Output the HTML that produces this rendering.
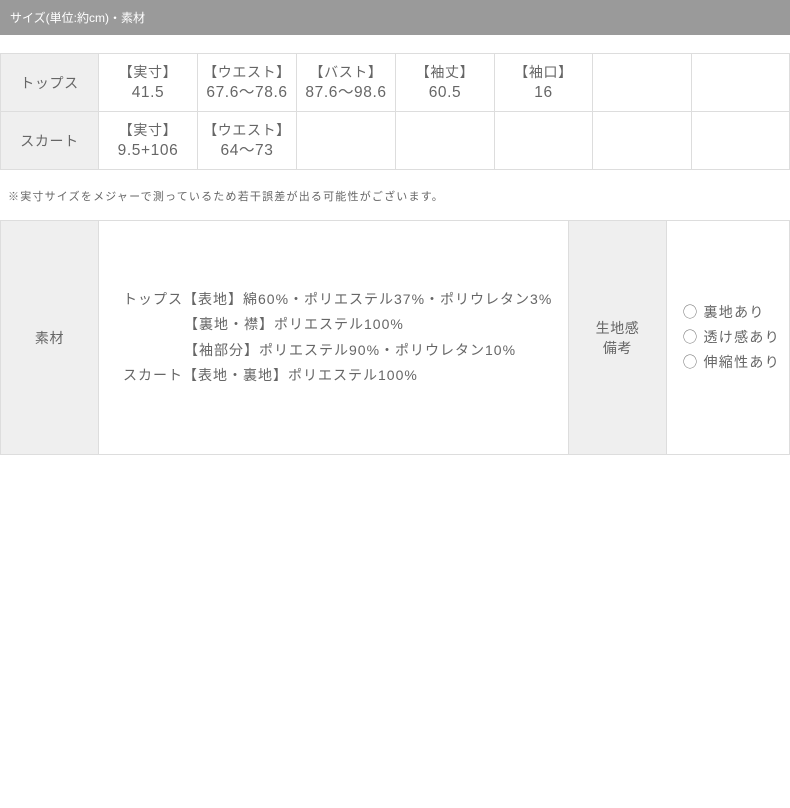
<!DOCTYPE html>
<html><head><meta charset="utf-8"><style>
body{margin:0;width:790px;height:808px;background:#fff;font-family:"Liberation Sans","Noto Sans CJK JP",sans-serif;color:#666;position:relative;overflow:hidden}
.hd{position:absolute;left:0;top:0;width:790px;height:35px;background:#9a9a9a;color:#fff;font-size:12px;line-height:37px;padding-left:10px;box-sizing:border-box}
.c{position:absolute;box-sizing:border-box;border-right:1px solid #ddd;border-bottom:1px solid #ddd;display:flex;align-items:center;justify-content:center;text-align:center;font-size:14px;line-height:20px;letter-spacing:0.6px}
.n{font-size:15.5px;letter-spacing:0.6px}
.g{background:#efefef}
.note{position:absolute;left:8px;top:188px;font-size:11px;color:#666;letter-spacing:1.2px}
</style></head><body>
<div class="hd">サイズ(単位:約cm)・素材</div>
<div style="position:absolute;left:0;top:53px;width:790px;border-top:1px solid #ddd"></div>
<div class="c g" style="left:0;top:54px;width:99px;height:58px;border-left:1px solid #ddd">トップス</div>
<div class="c" style="left:99px;top:54px;width:99px;height:58px"><div>【実寸】<br><span class="n">41.5</span></div></div>
<div class="c" style="left:198px;top:54px;width:99px;height:58px"><div>【ウエスト】<br><span class="n">67.6〜78.6</span></div></div>
<div class="c" style="left:297px;top:54px;width:99px;height:58px"><div>【バスト】<br><span class="n">87.6〜98.6</span></div></div>
<div class="c" style="left:396px;top:54px;width:99px;height:58px"><div>【袖丈】<br><span class="n">60.5</span></div></div>
<div class="c" style="left:495px;top:54px;width:98px;height:58px"><div>【袖口】<br><span class="n">16</span></div></div>
<div class="c" style="left:593px;top:54px;width:99px;height:58px"></div>
<div class="c" style="left:692px;top:54px;width:98px;height:58px"></div>
<div class="c g" style="left:0;top:112px;width:99px;height:58px;border-left:1px solid #ddd">スカート</div>
<div class="c" style="left:99px;top:112px;width:99px;height:58px"><div>【実寸】<br><span class="n">9.5+106</span></div></div>
<div class="c" style="left:198px;top:112px;width:99px;height:58px"><div>【ウエスト】<br><span class="n">64〜73</span></div></div>
<div class="c" style="left:297px;top:112px;width:99px;height:58px"></div>
<div class="c" style="left:396px;top:112px;width:99px;height:58px"></div>
<div class="c" style="left:495px;top:112px;width:98px;height:58px"></div>
<div class="c" style="left:593px;top:112px;width:99px;height:58px"></div>
<div class="c" style="left:692px;top:112px;width:98px;height:58px"></div>
<div class="note">※実寸サイズをメジャーで測っているため若干誤差が出る可能性がございます。</div>
<div style="position:absolute;left:0;top:220px;width:790px;border-top:1px solid #ddd"></div>
<div class="c g" style="left:0;top:221px;width:99px;height:234px;border-left:1px solid #ddd">素材</div>
<div class="c" style="left:99px;top:221px;width:470px;height:234px;justify-content:flex-start;text-align:left;padding-left:24px;line-height:25.5px;font-size:14px;letter-spacing:1px">
<div>トップス【表地】綿60%・ポリエステル37%・ポリウレタン3%<br><span style="padding-left:61px">【裏地・襟】ポリエステル100%</span><br><span style="padding-left:61px">【袖部分】ポリエステル90%・ポリウレタン10%</span><br>スカート【表地・裏地】ポリエステル100%</div></div>
<div class="c g" style="left:569px;top:221px;width:98px;height:234px">生地感<br>備考</div>
<div class="c" style="left:667px;top:221px;width:123px;height:234px;justify-content:flex-start;text-align:left;padding-left:16px;line-height:25px;font-size:14px;letter-spacing:1.3px"><div>◯ 裏地あり<br>◯ 透け感あり<br>◯ 伸縮性あり</div></div>
</body></html>
